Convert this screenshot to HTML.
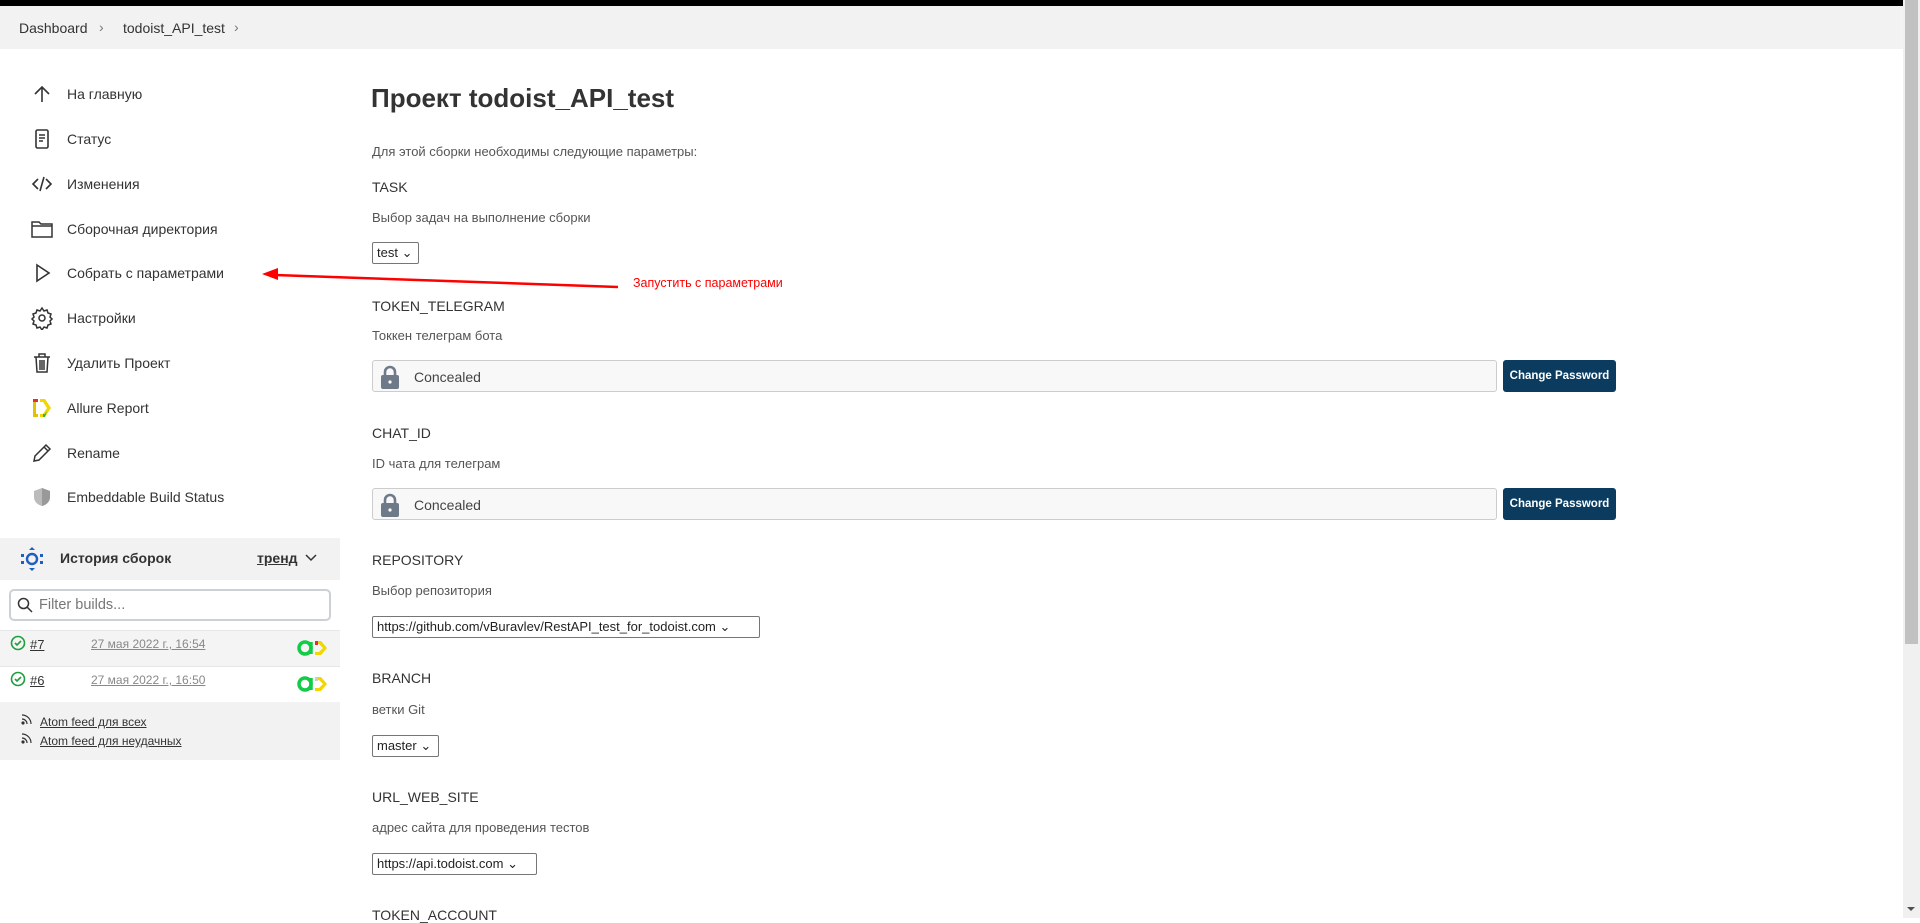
<!DOCTYPE html>
<html><head><meta charset="utf-8"><style>
*{box-sizing:border-box;margin:0;padding:0}
body{width:1920px;height:918px;overflow:hidden;background:#fff;font-family:"Liberation Sans","DejaVu Sans",sans-serif;color:#333;position:relative}
.abs{position:absolute;white-space:nowrap}
#top{position:absolute;left:0;top:0;width:1903px;height:6px;background:#000}
#bc{position:absolute;left:0;top:6px;width:1903px;height:43px;background:#f2f2f2;font-size:14px;color:#333}
.nav{position:absolute;left:67px;font-size:14px;color:#333}
.ic{position:absolute;left:30px;width:24px;height:24px}
.lbl{position:absolute;left:372px;font-size:14px;color:#333}
.desc{position:absolute;left:372px;font-size:13px;color:#555}
.sel{position:absolute;left:372px;height:22px;border:1px solid #767676;font-size:13px;padding:2px 4px;color:#222;background:#fff;border-radius:2px}
.pw{position:absolute;left:372px;width:1125px;height:32px;border:1px solid #ccc;border-radius:3px;background:#f8f8f8;font-size:14px;color:#444}
.btn{position:absolute;left:1503px;width:113px;height:32px;background:#0b3c60;border-radius:3px;color:#fff;font-weight:bold;font-size:11.5px;text-align:center;line-height:32px}
</style></head><body>
<div id="top"></div>
<div id="bc"><span class="abs" style="left:19px;top:14px">Dashboard</span><span class="abs" style="left:99px;top:13px;color:#777">&#x203A;</span><span class="abs" style="left:123px;top:14px">todoist_API_test</span><span class="abs" style="left:234px;top:13px;color:#777">&#x203A;</span></div>

<!-- sidebar icons -->
<svg class="ic" style="top:82px" viewBox="0 0 24 24" fill="none" stroke="#333" stroke-width="1.6"><path d="M12 20V5M5 12l7-7 7 7"/></svg>
<svg class="ic" style="top:127px" viewBox="0 0 24 24" fill="none" stroke="#333" stroke-width="1.6"><rect x="6" y="3" width="12" height="18" rx="1.5"/><path d="M9 8h6M9 11h6M9 14h4"/></svg>
<svg class="ic" style="top:172px" viewBox="0 0 24 24" fill="none" stroke="#333" stroke-width="1.6"><path d="M8 7l-5 5 5 5M16 7l5 5-5 5M14 5l-4 14"/></svg>
<svg class="ic" style="top:217px" viewBox="0 0 24 24" fill="none" stroke="#333" stroke-width="1.5"><path d="M2 5h7l2 2h11v13H2zM2 9h20"/></svg>
<svg class="ic" style="top:261px" viewBox="0 0 24 24" fill="none" stroke="#333" stroke-width="1.6"><path d="M7 4l12 8-12 8z"/></svg>
<svg class="ic" style="top:306px" viewBox="0 0 24 24" fill="none" stroke="#333" stroke-width="1.5"><circle cx="12" cy="12" r="3"/><path d="M12 2l2 3 3-1 1 3 3 1-1 3 2 2-2 2 1 3-3 1-1 3-3-1-2 3-2-3-3 1-1-3-3-1 1-3-2-2 2-2-1-3 3-1 1-3 3 1z"/></svg>
<svg class="ic" style="top:351px" viewBox="0 0 24 24" fill="none" stroke="#333" stroke-width="1.5"><path d="M4 6h16M9 6V3h6v3M6 6l1 15h10l1-15M10 9v10M12 9v10M14 9v10"/></svg>
<svg class="ic" style="top:396px" viewBox="0 0 24 24"><path d="M3 3h5v3H6v12h2v3H3z" fill="#e3c200"/><path d="M3 3h5v3H3z" fill="#e62e2e"/><path d="M10 3h5l6 9-6 9h-5v-3h3l4-6-4-6h-3z" fill="#f2d600"/><path d="M17 15l-2 3h-2v3h2z" fill="#3cb043"/></svg>
<svg class="ic" style="top:441px" viewBox="0 0 24 24" fill="none" stroke="#333" stroke-width="1.5"><path d="M4 20l1-5L16 4l4 4L9 19zM14 6l4 4"/></svg>
<svg class="ic" style="top:485px" viewBox="0 0 24 24"><path d="M12 3l8 3v6c0 5-4 8-8 9-4-1-8-4-8-9V6z" fill="#bbb"/><path d="M12 3l8 3v6c0 5-4 8-8 9z" fill="#999"/></svg>
<span class="nav abs" style="top:86px">На главную</span>
<span class="nav abs" style="top:131px">Статус</span>
<span class="nav abs" style="top:176px">Изменения</span>
<span class="nav abs" style="top:221px">Сборочная директория</span>
<span class="nav abs" style="top:265px">Собрать с параметрами</span>
<span class="nav abs" style="top:310px">Настройки</span>
<span class="nav abs" style="top:355px">Удалить Проект</span>
<span class="nav abs" style="top:400px">Allure Report</span>
<span class="nav abs" style="top:445px">Rename</span>
<span class="nav abs" style="top:489px">Embeddable Build Status</span>

<!-- build history -->
<div class="abs" style="left:0;top:538px;width:340px;height:42px;background:#f2f2f2"></div>
<svg class="abs" style="left:20px;top:546px" width="24" height="26" viewBox="0 0 24 26"><circle cx="12" cy="13" r="5" fill="none" stroke="#1f5fbf" stroke-width="2.4"/><path d="M12 1l3 3H9zM12 25l3-3H9zM1 8h3v3H1zM20 8h3v3h-3zM1 15h3v3H1zM20 15h3v3h-3z" fill="#1f5fbf"/></svg>
<span class="abs" style="left:60px;top:550px;font-size:14px;font-weight:bold;color:#333">История сборок</span>
<span class="abs" style="left:257px;top:550px;font-size:14px;font-weight:bold;color:#333;text-decoration:underline">тренд</span>
<svg class="abs" style="left:304px;top:553px" width="14" height="10" viewBox="0 0 14 10" fill="none" stroke="#333" stroke-width="1.5"><path d="M2 2l5 5 5-5"/></svg>
<div class="abs" style="left:9px;top:589px;width:322px;height:32px;border:2px solid #ccd1d6;border-radius:5px;background:#fff"></div>
<svg class="abs" style="left:17px;top:597px" width="16" height="16" viewBox="0 0 16 16" fill="none" stroke="#333" stroke-width="1.5"><circle cx="6.5" cy="6.5" r="5"/><path d="M10 10l5 5"/></svg>
<span class="abs" style="left:39px;top:597px;font-size:14.5px;color:#777">Filter builds...</span>
<div class="abs" style="left:0;top:630px;width:340px;height:36px;background:#f4f4f4;border-top:1px solid #e6e6e6"></div>
<div class="abs" style="left:0;top:666px;width:340px;height:36px;background:#fff;border-top:1px solid #e6e6e6"></div>
<svg class="abs" style="left:10px;top:635px" width="16" height="16" viewBox="0 0 16 16" fill="none" stroke="#1e9e3e" stroke-width="1.6"><circle cx="8" cy="8" r="6.5"/><path d="M5 8l2 2 4-4"/></svg>
<svg class="abs" style="left:10px;top:671px" width="16" height="16" viewBox="0 0 16 16" fill="none" stroke="#1e9e3e" stroke-width="1.6"><circle cx="8" cy="8" r="6.5"/><path d="M5 8l2 2 4-4"/></svg>
<span class="abs" style="left:30px;top:637px;font-size:13px;text-decoration:underline;color:#333">#7</span>
<span class="abs" style="left:30px;top:673px;font-size:13px;text-decoration:underline;color:#333">#6</span>
<span class="abs" style="left:91px;top:637px;font-size:12px;text-decoration:underline;color:#888">27 мая 2022 г., 16:54</span>
<span class="abs" style="left:91px;top:673px;font-size:12px;text-decoration:underline;color:#888">27 мая 2022 г., 16:50</span>
<svg class="abs" style="left:297px;top:638px" width="32" height="20" viewBox="0 0 32 20"><circle cx="8" cy="10" r="6" fill="none" stroke="#11cc44" stroke-width="3.5"/><path d="M14 4v12" stroke="#11cc44" stroke-width="3.5"/><path d="M18 3h6l6 7-6 7h-6v-3h4l4-4-4-4h-4z" fill="#f2d600"/><path d="M18 3h3v4h-3z" fill="#e62e2e"/></svg>
<svg class="abs" style="left:297px;top:674px" width="32" height="20" viewBox="0 0 32 20"><circle cx="8" cy="10" r="6" fill="none" stroke="#11cc44" stroke-width="3.5"/><path d="M14 4v12" stroke="#11cc44" stroke-width="3.5"/><path d="M18 3h6l6 7-6 7h-6v-3h4l4-4-4-4h-4z" fill="#f2d600"/><path d="M18 3h3v4h-3z" fill="#ccc"/></svg>
<div class="abs" style="left:0;top:702px;width:340px;height:58px;background:#f2f2f2"></div>
<span class="abs" style="left:40px;top:715px;font-size:12px;text-decoration:underline;color:#333">Atom feed для всех</span>
<span class="abs" style="left:40px;top:734px;font-size:12px;text-decoration:underline;color:#333">Atom feed для неудачных</span>
<svg class="abs" style="left:21px;top:713px" width="12" height="12" viewBox="0 0 12 12" fill="none" stroke="#333" stroke-width="1.2"><circle cx="2" cy="10" r="1" fill="#333"/><path d="M1 6a5 5 0 0 1 5 5M1 2a9 9 0 0 1 9 9"/></svg>
<svg class="abs" style="left:21px;top:732px" width="12" height="12" viewBox="0 0 12 12" fill="none" stroke="#333" stroke-width="1.2"><circle cx="2" cy="10" r="1" fill="#333"/><path d="M1 6a5 5 0 0 1 5 5M1 2a9 9 0 0 1 9 9"/></svg>

<!-- main -->
<div class="abs" style="left:371px;top:83px;font-size:26px;font-weight:bold;color:#333">Проект todoist_API_test</div>
<span class="desc abs" style="top:144px">Для этой сборки необходимы следующие параметры:</span>
<span class="lbl abs" style="top:179px">TASK</span>
<span class="desc abs" style="top:210px">Выбор задач на выполнение сборки</span>
<div class="sel" style="top:242px;width:47px">test &#x2304;</div>
<span class="lbl abs" style="top:298px">TOKEN_TELEGRAM</span>
<span class="desc abs" style="top:328px">Токкен телеграм бота</span>
<div class="pw" style="top:360px"><svg class="abs" style="left:7px;top:4px" width="20" height="24" viewBox="0 0 20 24"><path d="M5 11V7a5 5 0 0 1 10 0v4" fill="none" stroke="#6e7a8a" stroke-width="2.6"/><rect x="1" y="10" width="18" height="14" rx="2" fill="#6e7a8a"/><circle cx="10" cy="17" r="1.6" fill="#fff"/></svg><span class="abs" style="left:41px;top:8px">Concealed</span></div>
<div class="btn" style="top:360px">Change Password</div>
<span class="lbl abs" style="top:425px">CHAT_ID</span>
<span class="desc abs" style="top:456px">ID чата для телеграм</span>
<div class="pw" style="top:488px"><svg class="abs" style="left:7px;top:4px" width="20" height="24" viewBox="0 0 20 24"><path d="M5 11V7a5 5 0 0 1 10 0v4" fill="none" stroke="#6e7a8a" stroke-width="2.6"/><rect x="1" y="10" width="18" height="14" rx="2" fill="#6e7a8a"/><circle cx="10" cy="17" r="1.6" fill="#fff"/></svg><span class="abs" style="left:41px;top:8px">Concealed</span></div>
<div class="btn" style="top:488px">Change Password</div>
<span class="lbl abs" style="top:552px">REPOSITORY</span>
<span class="desc abs" style="top:583px">Выбор репозитория</span>
<div class="sel" style="top:616px;width:388px">https://github.com/vBuravlev/RestAPI_test_for_todoist.com &#x2304;</div>
<span class="lbl abs" style="top:670px">BRANCH</span>
<span class="desc abs" style="top:702px">ветки Git</span>
<div class="sel" style="top:735px;width:67px">master &#x2304;</div>
<span class="lbl abs" style="top:789px">URL_WEB_SITE</span>
<span class="desc abs" style="top:820px">адрес сайта для проведения тестов</span>
<div class="sel" style="top:853px;width:165px">https://api.todoist.com &#x2304;</div>
<span class="lbl abs" style="top:907px">TOKEN_ACCOUNT</span>

<!-- annotation arrow -->
<svg class="abs" style="left:0;top:0" width="1920" height="918"><path d="M275 275L618 287" stroke="#f00" stroke-width="2.5"/><path d="M262 274l16-6v12z" fill="#f00"/></svg>
<span class="abs" style="left:633px;top:276px;font-size:12.5px;color:#f00">Запустить с параметрами</span>

<!-- scrollbar -->
<div class="abs" style="left:1903px;top:0;width:17px;height:918px;background:#f0f0f0"></div>
<div class="abs" style="left:1905px;top:0;width:13px;height:644px;background:#c1c1c1"></div>
<svg class="abs" style="left:1906px;top:906px" width="10" height="6" viewBox="0 0 10 6"><path d="M1 1h8L5 5z" fill="#505050"/></svg>
</body></html>
